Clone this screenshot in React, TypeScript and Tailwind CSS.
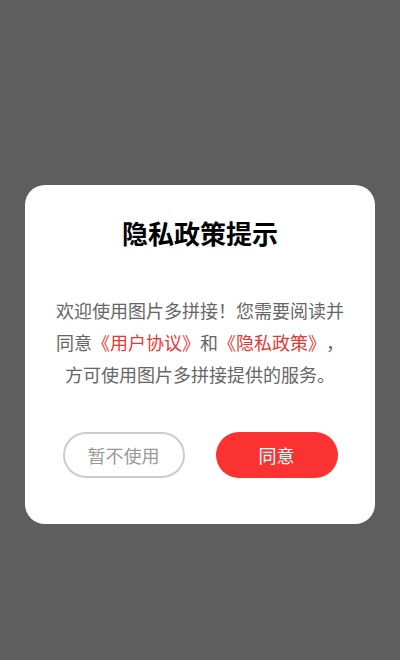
export default function App() {
  return (
    <div
      className="min-h-[660px] bg-[#5e5e5e] pt-[185px] flex justify-center"
      style={{ fontFamily: '"Noto Sans CJK SC", "Noto Sans", sans-serif' }}
    >
      <div className="w-[350px] h-[339px] bg-white rounded-[20px] pt-[30px] px-[25px] flex flex-col items-center">
        <h2 className="text-[26px] leading-[36px] font-bold text-black">
          隐私政策提示
        </h2>
        <p className="mt-[43px] text-[18px] leading-[32px] text-[#666666] text-center [text-spacing-trim:space-all]">
          欢迎使用图片多拼接！您需要阅读并
          <br />
          同意<span className="text-[#e53935]">《用户协议》</span>和
          <span className="text-[#e53935]">《隐私政策》</span>，
          <br />
          方可使用图片多拼接提供的服务。
        </p>
        <div className="mt-[42px] flex gap-[31px]">
          <button className="w-[122px] h-[46px] rounded-full border-2 border-[#cccccc] text-[18px] text-[#999999]">
            暂不使用
          </button>
          <button className="w-[122px] h-[46px] rounded-full bg-[#fa3232] text-[18px] text-white">
            同意
          </button>
        </div>
      </div>
    </div>
  );
}
